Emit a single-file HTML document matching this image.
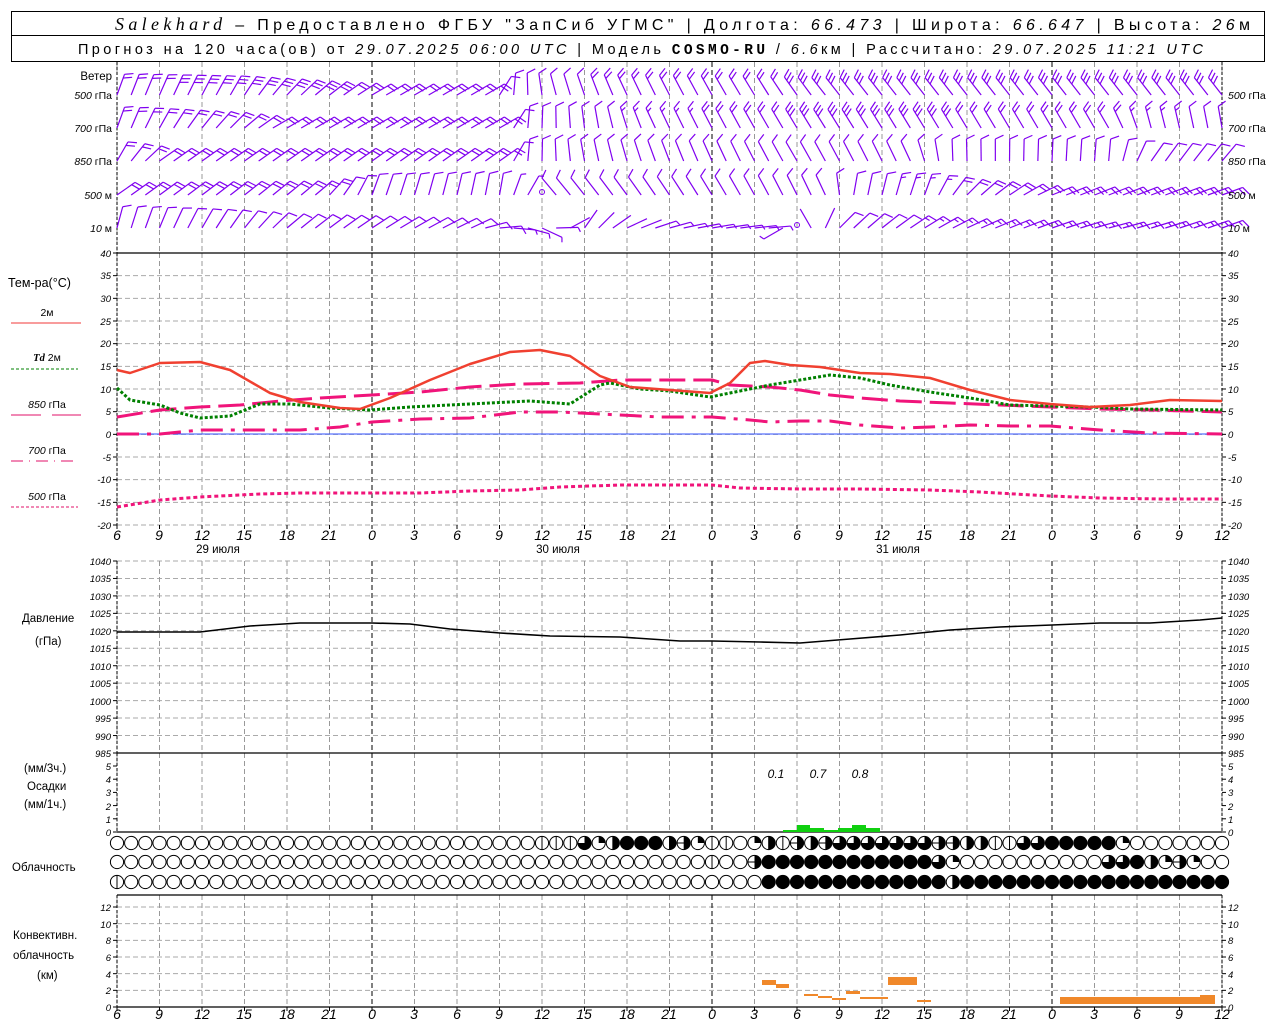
<!DOCTYPE html>
<html><head><meta charset="utf-8"><style>
html,body{margin:0;padding:0;background:#fff;}
svg{display:block;font-family:"Liberation Sans",sans-serif;}
.t{font-size:9.5px;font-style:italic;fill:#000}
.l{font-size:11.5px;fill:#000}
.h{font-size:14px;font-style:italic;fill:#000}
</style></head><body>
<svg id="s" width="1280" height="1024" xmlns="http://www.w3.org/2000/svg">
<rect x="11.5" y="11.5" width="1253" height="24" fill="none" stroke="#000"/>
<rect x="11.5" y="35.5" width="1253" height="26" fill="none" stroke="#000"/>
<text x="115" y="30" font-size="16" textLength="1135" lengthAdjust="spacing"><tspan font-family="Liberation Serif" font-style="italic" font-size="18">Salekhard</tspan> – Предоставлено ФГБУ "ЗапСиб УГМС" | Долгота: <tspan font-style="italic">66.473</tspan> | Широта: <tspan font-style="italic">66.647</tspan> | Высота: <tspan font-style="italic">26</tspan>м</text>
<text x="78" y="54" font-size="14.5" textLength="1125" lengthAdjust="spacing">Прогноз на 120 часа(ов) от <tspan font-style="italic">29.07.2025 06:00 UTC</tspan>  | Модель <tspan font-weight="bold" font-family="Liberation Mono">COSMO-RU</tspan> / <tspan font-style="italic">6.6</tspan>км | Рассчитано: <tspan font-style="italic">29.07.2025 11:21 UTC</tspan></text>
<g id="grid"></g>
<g id="g"></g>
<g class="l">
<text x="112" y="80" text-anchor="end">Ветер</text>
<text x="112" y="99" text-anchor="end" font-size="10.5"><tspan font-style="italic">500</tspan> гПа</text>
<text x="112" y="132" text-anchor="end" font-size="10.5"><tspan font-style="italic">700</tspan> гПа</text>
<text x="112" y="165" text-anchor="end" font-size="10.5"><tspan font-style="italic">850</tspan> гПа</text>
<text x="112" y="199" text-anchor="end" font-size="10.5"><tspan font-style="italic">500</tspan> м</text>
<text x="112" y="232" text-anchor="end" font-size="10.5"><tspan font-style="italic">10</tspan>   м</text>
<text x="1228" y="99" font-size="10.5"><tspan font-style="italic">500</tspan> гПа</text>
<text x="1228" y="132" font-size="10.5"><tspan font-style="italic">700</tspan> гПа</text>
<text x="1228" y="165" font-size="10.5"><tspan font-style="italic">850</tspan> гПа</text>
<text x="1228" y="199" font-size="10.5"><tspan font-style="italic">500</tspan> м</text>
<text x="1228" y="232" font-size="10.5"><tspan font-style="italic">10</tspan>   м</text>
<text x="8" y="287" font-size="12.5">Тем-ра(°С)</text>
<text x="47" y="316" text-anchor="middle" font-size="10.5">2м</text>
<text x="47" y="361" text-anchor="middle" font-size="10.5"><tspan font-style="italic" font-weight="bold" font-family="Liberation Serif">Td</tspan>  2м</text>
<text x="47" y="408" text-anchor="middle" font-size="10.5"><tspan font-style="italic">850</tspan>  гПа</text>
<text x="47" y="454" text-anchor="middle" font-size="10.5"><tspan font-style="italic">700</tspan>  гПа</text>
<text x="47" y="500" text-anchor="middle" font-size="10.5"><tspan font-style="italic">500</tspan>  гПа</text>
<text x="22" y="622">Давление</text>
<text x="35" y="645">(гПа)</text>
<text x="24" y="772">(мм/3ч.)</text>
<text x="27" y="790">Осадки</text>
<text x="24" y="808">(мм/1ч.)</text>
<text x="12" y="871">Облачность</text>
<text x="13" y="939">Конвективн.</text>
<text x="13" y="959">облачность</text>
<text x="37" y="979">(км)</text>
</g>
<line x1="11" y1="323" x2="81" y2="323" stroke="#f03a3a" stroke-width="1"/>
<line x1="11" y1="369" x2="78" y2="369" stroke="#008000" stroke-dasharray="3,2"/>
<line x1="11" y1="415" x2="41" y2="415" stroke="#e0106a"/><line x1="52" y1="415" x2="81" y2="415" stroke="#e0106a"/>
<line x1="11" y1="461" x2="78" y2="461" stroke="#e0106a" stroke-dasharray="12,6,1,6"/>
<line x1="11" y1="507" x2="78" y2="507" stroke="#e0106a" stroke-dasharray="3,2"/>
<g class="h" text-anchor="middle">
<text x="117" y="540">6</text><text x="159" y="540">9</text><text x="202" y="540">12</text><text x="244" y="540">15</text><text x="287" y="540">18</text><text x="329" y="540">21</text><text x="372" y="540">0</text><text x="414" y="540">3</text><text x="457" y="540">6</text><text x="499" y="540">9</text><text x="542" y="540">12</text><text x="584" y="540">15</text><text x="627" y="540">18</text><text x="669" y="540">21</text><text x="712" y="540">0</text><text x="754" y="540">3</text><text x="797" y="540">6</text><text x="839" y="540">9</text><text x="882" y="540">12</text><text x="924" y="540">15</text><text x="967" y="540">18</text><text x="1009" y="540">21</text><text x="1052" y="540">0</text><text x="1094" y="540">3</text><text x="1137" y="540">6</text><text x="1179" y="540">9</text><text x="1222" y="540">12</text>
<text x="117" y="1019">6</text><text x="159" y="1019">9</text><text x="202" y="1019">12</text><text x="244" y="1019">15</text><text x="287" y="1019">18</text><text x="329" y="1019">21</text><text x="372" y="1019">0</text><text x="414" y="1019">3</text><text x="457" y="1019">6</text><text x="499" y="1019">9</text><text x="542" y="1019">12</text><text x="584" y="1019">15</text><text x="627" y="1019">18</text><text x="669" y="1019">21</text><text x="712" y="1019">0</text><text x="754" y="1019">3</text><text x="797" y="1019">6</text><text x="839" y="1019">9</text><text x="882" y="1019">12</text><text x="924" y="1019">15</text><text x="967" y="1019">18</text><text x="1009" y="1019">21</text><text x="1052" y="1019">0</text><text x="1094" y="1019">3</text><text x="1137" y="1019">6</text><text x="1179" y="1019">9</text><text x="1222" y="1019">12</text>
<text x="776" y="778" font-size="12">0.1</text><text x="818" y="778" font-size="12">0.7</text><text x="860" y="778" font-size="12">0.8</text>
</g>
<g class="l" text-anchor="middle"><text x="218" y="553">29 июля</text><text x="558" y="553">30 июля</text><text x="898" y="553">31 июля</text></g>
<g class="t" text-anchor="end">
<text x="111" y="257">40</text><text x="111" y="279">35</text><text x="111" y="302">30</text><text x="111" y="325">25</text><text x="111" y="347">20</text><text x="111" y="370">15</text><text x="111" y="393">10</text><text x="111" y="415">5</text><text x="111" y="438">0</text><text x="111" y="461">-5</text><text x="111" y="483">-10</text><text x="111" y="506">-15</text><text x="111" y="529">-20</text>
<text x="111" y="565">1040</text><text x="111" y="582">1035</text><text x="111" y="600">1030</text><text x="111" y="617">1025</text><text x="111" y="635">1020</text><text x="111" y="652">1015</text><text x="111" y="670">1010</text><text x="111" y="687">1005</text><text x="111" y="705">1000</text><text x="111" y="722">995</text><text x="111" y="740">990</text><text x="111" y="757">985</text>
<text x="111" y="770">5</text><text x="111" y="783">4</text><text x="111" y="796">3</text><text x="111" y="810">2</text><text x="111" y="823">1</text><text x="111" y="836">0</text>
<text x="111" y="911">12</text><text x="111" y="928">10</text><text x="111" y="944">8</text><text x="111" y="961">6</text><text x="111" y="978">4</text><text x="111" y="994">2</text><text x="111" y="1011">0</text>
</g>
<g class="t">
<text x="1228" y="257">40</text><text x="1228" y="279">35</text><text x="1228" y="302">30</text><text x="1228" y="325">25</text><text x="1228" y="347">20</text><text x="1228" y="370">15</text><text x="1228" y="393">10</text><text x="1228" y="415">5</text><text x="1228" y="438">0</text><text x="1228" y="461">-5</text><text x="1228" y="483">-10</text><text x="1228" y="506">-15</text><text x="1228" y="529">-20</text>
<text x="1228" y="565">1040</text><text x="1228" y="582">1035</text><text x="1228" y="600">1030</text><text x="1228" y="617">1025</text><text x="1228" y="635">1020</text><text x="1228" y="652">1015</text><text x="1228" y="670">1010</text><text x="1228" y="687">1005</text><text x="1228" y="705">1000</text><text x="1228" y="722">995</text><text x="1228" y="740">990</text><text x="1228" y="757">985</text>
<text x="1228" y="770">5</text><text x="1228" y="783">4</text><text x="1228" y="796">3</text><text x="1228" y="810">2</text><text x="1228" y="823">1</text><text x="1228" y="836">0</text>
<text x="1228" y="911">12</text><text x="1228" y="928">10</text><text x="1228" y="944">8</text><text x="1228" y="961">6</text><text x="1228" y="978">4</text><text x="1228" y="994">2</text><text x="1228" y="1011">0</text>
</g>
</svg>
<script>
var NS="http://www.w3.org/2000/svg",G=document.getElementById("g"),GR=document.getElementById("grid");
function el(p,t,a){var e=document.createElementNS(NS,t);for(var k in a)e.setAttribute(k,a[k]);p.appendChild(e);return e;}
function ln(p,x1,y1,x2,y2,c,w,d){var a={x1:x1,y1:y1,x2:x2,y2:y2,stroke:c,"stroke-width":w||1};if(d)a["stroke-dasharray"]=d;return el(p,"line",a);}
var X0=117,X1=1222;
var panels=[[62,253],[253,525],[561,753],[753,832],[895,1007]];
var i,k;
for(k=1;k<12;k++){ln(GR,X0,253+k*272/12,X1,253+k*272/12,"#aaa",1,"5,3");}
ln(GR,X0,525,X1,525,"#aaa",1,"5,3");
for(k=0;k<11;k++){var y=561+k*17.45;ln(GR,X0,y,X1,y,"#aaa",1,"5,3");}
for(k=1;k<7;k++){var y=1007-k*16.67;ln(GR,X0,y,X1,y,"#aaa",1,"5,3");}
panels.forEach(function(p){
 for(k=0;k<=26;k++){var x=X0+k*42.5;var day=(k%8==6);
  ln(GR,x,p[0],x,p[1],day?"#000":"#999",1,"5,3");}
 ln(GR,X0,p[0],X0,p[1],"#000",1,"3,2");ln(GR,X1,p[0],X1,p[1],"#000",1,"3,2");
 });
[253,753,832,895,1007].forEach(function(y){ln(GR,X0,y,X1,y,"#000",1.2);});
function ticks(y0,y1,n){for(var k=0;k<=n;k++){var y=y0+k*(y1-y0)/n;ln(GR,X0-4,y,X0,y,"#000");ln(GR,X1,y,X1+4,y,"#000");}}
ticks(253,525,12);ticks(561,753,11);ticks(766,832,5);ticks(907,1007,6);
for(k=0;k<=26;k++){var x=X0+k*42.5;ln(GR,x,525,x,529,"#000");ln(GR,x,1007,x,1011,"#000");}
ln(G,X0,434,X1,434,"#3050ff",1);
var rows=[
 [95,[[0,-70,2],[8,-60,3],[14,-40,3],[18,-30,2],[26,-30,2],[28,-85,1],[31,-105,1],[36,-115,2],[46,-122,2],[50,-128,3],[78,-128,3]]],
 [128,[[0,-70,2],[8,-45,2],[11,-30,2],[27,-30,2],[29,-85,1],[34,-100,1],[38,-115,1.5],[46,-120,2],[50,-122,3],[70,-120,2],[73,-105,1.5],[78,-100,1]]],
 [161,[[0,-60,2],[3,-35,2],[27,-35,2],[29,-85,1],[33,-100,1],[38,-110,1],[48,-120,1],[56,-115,1],[59,-92,1],[70,-85,1],[73,-55,1],[78,-50,1]]],
 [195,[[0,-35,2],[14,-40,2],[18,-70,1],[27,-80,1],[29,-60,0.5],[31,-130,1],[50,-115,1],[52,-80,1],[57,-70,1.5],[60,-45,2],[66,-22,2],[78,-20,2]]],
 [228,[[0,-75,1],[8,-55,1],[12,-40,1],[25,-25,1],[30,25,0.5],[33,-55,0],[36,-25,0],[40,-12,0.5],[46,-5,0.5],[47,150,0.5],[48,200,0.5],[49,-120,0],[50,-65,0],[51,-45,1],[60,-25,1.5],[70,-15,1.5],[78,-20,1.5]]]];
function interp(kf,i){for(var j=0;j<kf.length-1;j++){if(i>=kf[j][0]&&i<=kf[j+1][0]){var f=(i-kf[j][0])/(kf[j+1][0]-kf[j][0]);return [kf[j][1]+f*(kf[j+1][1]-kf[j][1]),f<0.5?kf[j][2]:kf[j+1][2]];}}return [kf[kf.length-1][1],kf[kf.length-1][2]];}
var BC="#8000f0";
rows.forEach(function(r){
 for(i=0;i<=78;i++){
  var x=X0+i*14.167,y=r[0];
  if((r[0]==195&&i==30)||(r[0]==228&&i==48)){el(G,"circle",{cx:x,cy:y-3,r:2.5,fill:"none",stroke:BC});continue;}
  var v=interp(r[1],i),th=v[0]*Math.PI/180,n=v[1];
  var L=22,dx=Math.cos(th),dy=Math.sin(th),tx=x+L*dx,ty=y+L*dy;
  ln(G,x,y,tx,ty,BC,1.2);
  var bt=th+65*Math.PI/180,bx=Math.cos(bt),by=Math.sin(bt);
  var pos=0;while(n>0.01){var len=n>=1?9:5;var px=tx-pos*dx,py=ty-pos*dy;ln(G,px,py,px+len*bx,py+len*by,BC,1.2);n-=1;pos+=4;}
 }
});
function poly(pts,c,w,d){var s=pts.map(function(p){return p.join(",")}).join(" ");var a={points:s,fill:"none",stroke:c,"stroke-width":w,"stroke-linejoin":"round"};if(d)a["stroke-dasharray"]=d;el(G,"polyline",a);}
var MG="#f0147a";
poly([[117,507],[160,500],[200,497],[260,494],[300,493],[372,493],[420,493],[470,491],[520,490],[560,487],[620,485],[712,485],[740,488],[800,489],[860,489],[930,490],[980,492],[1050,496],[1100,498],[1160,499],[1222,499]],MG,3,"4,3");
poly([[117,434],[160,434],[200,430],[250,430],[300,430],[340,427],[372,422],[420,419],[470,418],[520,412],[560,412],[600,414],[660,417],[712,417],[750,420],[770,422],[800,421],[830,421],[860,425],[900,428],[930,427],[970,425],[1010,426],[1050,426],[1100,430],[1150,433],[1222,434]],MG,3,"22,8,4,8");
poly([[117,417],[160,410],[200,407],[240,405],[280,401],[320,398],[372,395],[420,392],[470,387],[520,384],[580,383],[620,380],[660,380],[712,380],[730,385],[770,387],[800,390],[830,395],[860,398],[900,401],[950,403],[1000,405],[1050,407],[1100,409],[1150,410],[1222,412]],MG,3,"26,8");
poly([[117,388],[130,400],[160,405],[180,413],[200,418],[230,416],[260,404],[290,404],[330,408],[370,410],[410,407],[450,405],[490,403],[530,401],[570,404],[600,385],[610,383],[640,389],[670,391],[710,397],[730,393],[770,385],[800,380],[830,375],[860,378],[890,385],[930,392],[970,398],[1010,405],[1050,406],[1090,407],[1130,409],[1222,410]],"#008000",3,"3,2");
poly([[117,370],[130,373],[160,363],[200,362],[230,370],[270,393],[300,402],[340,408],[360,409],[390,398],[430,380],[470,364],[510,352],[540,350],[570,356],[600,376],[630,387],[670,390],[710,393],[730,383],[750,363],[765,361],[790,365],[820,367],[860,373],[890,374],[930,378],[970,390],[1010,400],[1050,404],[1090,407],[1130,405],[1170,400],[1222,401]],"#f04030",2.5);
poly([[117,632],[150,632],[200,632],[250,626],[300,623],[372,623],[410,624],[450,629],[500,633],[550,636],[620,637],[680,641],[712,641],[760,642],[800,643],[850,639],[900,635],[950,630],[1000,627],[1052,625],[1100,623],[1150,623],[1200,620],[1222,618]],"#000",1.6);
[[783,830,14,2],[797,825,13,7],[810,828,14,4],[824,830,14,2],[838,828,14,4],[852,825,14,7],[866,828,14,4]].forEach(function(r){el(G,"rect",{x:r[0],y:r[1],width:r[2],height:r[3],fill:"#10d010"});});
[[762,980,14,5],[776,984,13,4],[804,994,14,2],[818,996,14,2],[832,998,14,2],[846,991,14,3],[860,997,14,2],[874,997,14,2],[888,977,29,8],[917,1000,14,2],[1060,997,140,7],[1200,995,15,9]].forEach(function(r){el(G,"rect",{x:r[0],y:r[1],width:r[2],height:r[3],fill:"#f0882a"});});
var cl=[
"oooooooooooooooooooooooooooooo"+"lll"+"tqh"+"fff"+"heq"+"ll"+"o"+"qh"+"l"+"ehe"+"ttttttt"+"ee"+"hh"+"ll"+"tt"+"fffff"+"q"+"ooooooo",
"oooooooooooooooooooooooooooooooooooooooooolooefffffffffffftqoooooooooottfhqeqooo",
"looooooooooooooooooooooooooooooooooooooooooooofffffffffffffhffffffffffffffffffff"];
var cy=[843,862,882];
function wedge(cx,cy,r,a0,a1){var p0=[cx+r*Math.sin(a0),cy-r*Math.cos(a0)],p1=[cx+r*Math.sin(a1),cy-r*Math.cos(a1)];var large=(a1-a0)>Math.PI?1:0;return "M"+cx+","+cy+"L"+p0+"A"+r+","+r+" 0 "+large+" 1 "+p1+"Z";}
for(k=0;k<3;k++){for(i=0;i<=78;i++){var c=cl[k][i]||"o",x=X0+i*14.167,y=cy[k],r=6.6;
 if(c=="f"){el(G,"circle",{cx:x,cy:y,r:r+0.5,fill:"#000"});continue;}
 el(G,"circle",{cx:x,cy:y,r:r,fill:"#fff",stroke:"#000","stroke-width":1});
 var P=Math.PI;
 if(c=="q")el(G,"path",{d:wedge(x,y,r,0,P/2),fill:"#000"});
 if(c=="h"){el(G,"path",{d:wedge(x,y,r,0,P),fill:"#000"});ln(G,x,y-r,x,y+r,"#000");}
 if(c=="t")el(G,"path",{d:wedge(x,y,r,0,1.5*P),fill:"#000"});
 if(c=="e"){el(G,"path",{d:wedge(x,y,r,0,P),fill:"#000"});ln(G,x-r,y,x+r,y,"#000");}
 if(c=="l")ln(G,x,y-r,x,y+r,"#000");
}}
</script>
</body></html>
